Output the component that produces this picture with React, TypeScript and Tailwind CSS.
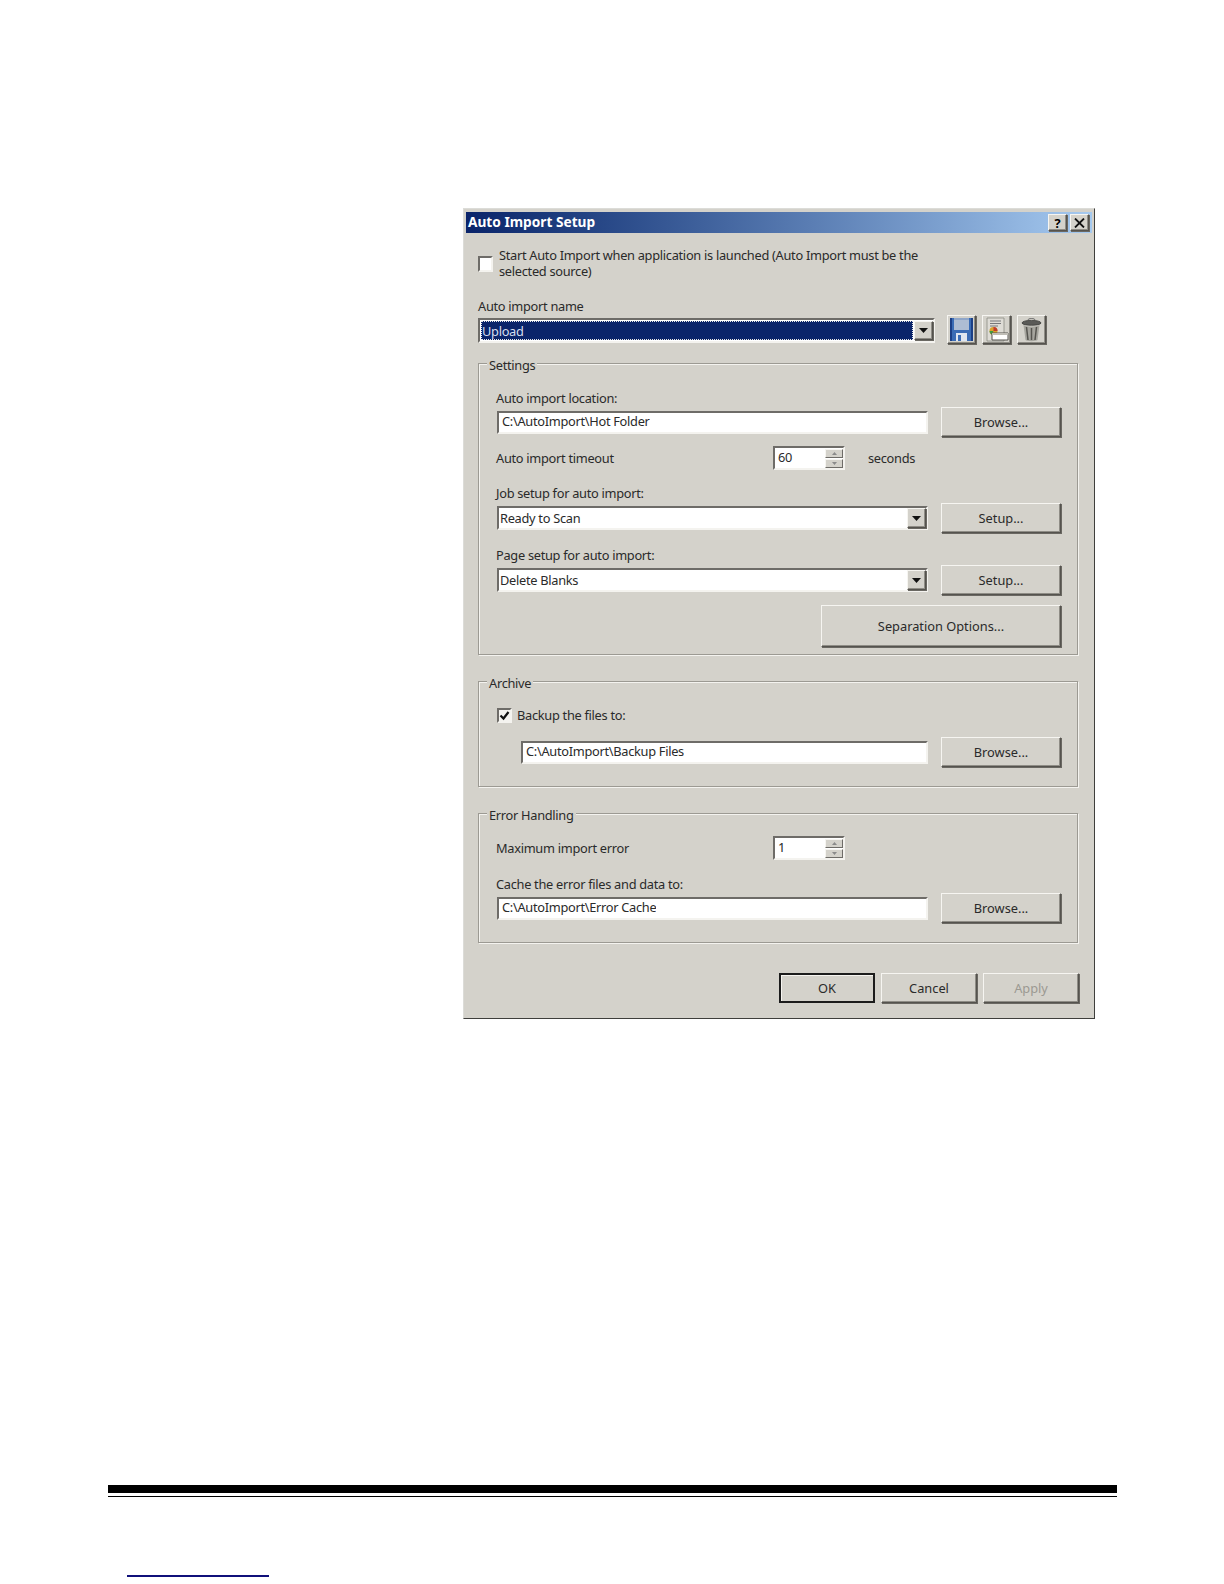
import React from "react";

const font = "font-['Noto_Sans','Liberation_Sans',sans-serif] text-[12.8px] leading-4 tracking-[-0.29px] text-[#2a2a2a]";
const raised = "border border-t-[#f6f5f1] border-l-[#f6f5f1] border-r-[#55534e] border-b-[#55534e] shadow-[inset_-1px_-1px_0_#8f8d86,1px_1px_0_#6a6862]";
const sunken = "border-2 border-t-[#6e6c68] border-l-[#6e6c68] border-r-[#f4f3ef] border-b-[#f4f3ef]";

function Btn({ children, w, h, dim, def }: { children: React.ReactNode; w: string; h: string; dim?: boolean; def?: boolean }) {
  return (
    <div className={`${w} ${h} shrink-0 tracking-normal flex items-center justify-center bg-[#d4d2cb] ${def ? "border-2 border-[#1c1c1c] shadow-[inset_1px_1px_0_#f6f5f1]" : raised} ${dim ? "text-[#9b9992]" : ""}`}>
      {children}
    </div>
  );
}

function Arrow() {
  return (
    <svg width="9" height="5" viewBox="0 0 9 5"><path d="M0 0h9L4.5 5z" fill="#111" /></svg>
  );
}

function Combo({ label }: { label: string }) {
  return (
    <div className={`ml-[1px] w-[431px] h-[24px] flex items-center bg-white pl-[1px] ${sunken}`}>
      <span className="flex-1 truncate">{label}</span>
      <div className={`w-[19px] h-[20px] flex items-center justify-center bg-[#d4d2cb] ${raised}`}><Arrow /></div>
    </div>
  );
}

function TextBox({ value, w = "w-[431px]" }: { value: string; w?: string }) {
  return (
    <div className={`${w} h-[23px] flex items-center bg-white pl-[3px] ${sunken}`}>
      <span className="truncate pb-[2px]">{value}</span>
    </div>
  );
}

function Spinner({ value }: { value: string }) {
  const part = "w-[18px] h-[9px] bg-[#d4d2cb] flex items-center justify-center border border-t-[#f6f5f1] border-l-[#f6f5f1] border-r-[#6e6c68] border-b-[#6e6c68]";
  return (
    <div className={`w-[72px] h-[24px] flex items-center bg-white pl-[3px] ${sunken}`}>
      <span className="flex-1 pb-[2px]">{value}</span>
      <div className="flex flex-col gap-[1px]">
        <div className={part}><svg width="5" height="3" viewBox="0 0 5 3"><path d="M0 3h5L2.5 0z" fill="#8a8a8a" /></svg></div>
        <div className={part}><svg width="5" height="3" viewBox="0 0 5 3"><path d="M0 0h5L2.5 3z" fill="#8a8a8a" /></svg></div>
      </div>
    </div>
  );
}

function Group({ title, children, h }: { title: string; children: React.ReactNode; h: string }) {
  return (
    <div className={`w-[600px] ${h} border border-[#9c9a93] shadow-[inset_1px_1px_0_#f4f3ef,1px_1px_0_#f4f3ef]`}>
      <div className="w-fit ml-[8px] -mt-[6px] h-[13px] px-[2px] bg-[#d4d2cb] flex items-center">{title}</div>
      {children}
    </div>
  );
}

function IconBtn({ children }: { children: React.ReactNode }) {
  return <div className={`w-[29px] h-[29px] flex items-center justify-center bg-[#d4d2cb] ${raised}`}>{children}</div>;
}

export default function App() {
  return (
    <div className="w-[1224px] h-[1584px] bg-white pt-[208px] flex flex-col">
      <div className={`ml-[463px] w-[632px] h-[811px] shrink-0 bg-[#d4d2cb] border border-t-[#dcdcd8] border-l-[#dcdcd8] border-r-[#3f3f3c] border-b-[#3f3f3c] px-[2px] pt-[3px] ${font}`}>
        {/* title bar */}
        <div className="h-[21px] bg-gradient-to-r from-[#0a246a] to-[#a6caf0] flex items-center pl-[2px] pr-[3px]">
          <span className="flex-1 font-bold text-white text-[13.700px] tracking-normal pb-[2px]">Auto Import Setup</span>
          <div className={`w-[19px] h-[17px] flex items-center justify-center bg-[#d4d2cb] font-bold text-black ${raised}`}>?</div>
          <div className={`w-[19px] h-[17px] ml-[3px] flex items-center justify-center bg-[#d4d2cb] ${raised}`}>
            <svg width="11" height="10" viewBox="0 0 11 10"><path d="M1 0.5L10 9.5M10 0.5L1 9.5" stroke="#111" strokeWidth="1.8" /></svg>
          </div>
        </div>

        <div className="pl-[12px]">
          {/* start checkbox */}
          <div className="h-[32px] mt-[15px] flex items-center">
            <div className={`w-[15px] h-[16px] bg-white ${sunken}`} />
            <div className="ml-[6px] w-[440px] leading-[16px] -mt-[2px]">Start Auto Import when application is launched (Auto Import must be the selected source)</div>
          </div>

          <div className="mt-[18px] h-[16px]">Auto import name</div>
          {/* name row */}
          <div className="mt-[1px] h-[29px] flex items-start">
            <div className={`mt-[3px] w-[457px] h-[25px] flex items-center bg-white ${sunken}`}>
              <div className="flex-1 h-[19px] ml-[1px] bg-[#0a246a] text-[#d5deef] flex items-center outline-1 outline-dotted outline-[#e8e8e8] -outline-offset-1">
                <span className="ml-[1px]">Upload</span>
              </div>
              <div className={`w-[19px] h-[19px] ml-[1px] flex items-center justify-center bg-[#d4d2cb] ${raised}`}><Arrow /></div>
            </div>
            <div className="ml-[12px] flex gap-[6px]">
              <IconBtn>
                <svg width="25" height="25" viewBox="0 0 25 25">
                  <path d="M1 1h23v23H1z" fill="#3a6cb5" />
                  <path d="M1 1h2v23H1zM22 1h2v23h-2z" fill="#1b3f86" />
                  <path d="M5 1h15v12H5z" fill="#aebdd3" />
                  <path d="M5 1h15v2H5z" fill="#8fa6c9" />
                  <path d="M7 16h11v8H7z" fill="#dfe6f0" />
                  <path d="M9 18h3v6H9z" fill="#3a6cb5" />
                </svg>
              </IconBtn>
              <IconBtn>
                <svg width="25" height="25" viewBox="0 0 25 25">
                  <path d="M3 1h17v23H3z" fill="#dedcd6" stroke="#8a8a84" strokeWidth="0.8" />
                  <path d="M6 4h11M6 6.500h11M6 9h8" stroke="#77777a" strokeWidth="1" />
                  <circle cx="9.500" cy="14" r="4" fill="#d9a12b" />
                  <path d="M9.500 14V10a4 4 0 0 1 4 4z" fill="#c23b2e" />
                  <path d="M9.500 14h-4a4 4 0 0 0 2 3.500z" fill="#3f9a45" />
                  <path d="M8 16h16v7H8z" fill="#fff" stroke="#55534e" strokeWidth="1" />
                  <path d="M8 16h16v2H8z" fill="#bfbdb6" />
                </svg>
              </IconBtn>
              <IconBtn>
                <svg width="25" height="25" viewBox="0 0 25 25">
                  <path d="M3 6C3 2.500 22 2.500 22 6 22 9 3 9 3 6z" fill="#5a5a57" stroke="#3c3c3a" strokeWidth="0.8" />
                  <path d="M9 3c0-2 7-2 7 0" fill="none" stroke="#666" strokeWidth="1" />
                  <path d="M4.500 8l2 15c1.500 1.500 10.500 1.500 12 0l2-15c-4 2-12 2-16 0z" fill="#a6a59e" />
                  <path d="M7.500 10l1.500 13M12.500 11v12M17.500 10l-1.500 13" stroke="#55544f" strokeWidth="1.500" />
                </svg>
              </IconBtn>
            </div>
          </div>

          {/* Settings */}
          <div className="mt-[19px]">
            <Group title="Settings" h="h-[292px]">
              <div className="pl-[17px] pr-[16px]">
                <div className="mt-[19px] h-[17px]">Auto import location:</div>
                <div className="h-[30px] flex items-center justify-between">
                  <div className="pl-[1px]"><TextBox value="C:\AutoImport\Hot Folder" /></div>
                  <Btn w="w-[120px]" h="h-[30px]">Browse...</Btn>
                </div>
                <div className="mt-[9px] h-[24px] flex items-center">
                  <span className="w-[277px]">Auto import timeout</span>
                  <Spinner value="60" />
                  <span className="ml-[23px]">seconds</span>
                </div>
                <div className="mt-[15px] h-[17px]">Job setup for auto import:</div>
                <div className="mt-[1px] h-[30px] flex items-center justify-between">
                  <Combo label="Ready to Scan" />
                  <Btn w="w-[120px]" h="h-[30px]">Setup...</Btn>
                </div>
                <div className="mt-[14px] h-[17px]">Page setup for auto import:</div>
                <div className="mt-[1px] h-[30px] flex items-center justify-between">
                  <Combo label="Delete Blanks" />
                  <Btn w="w-[120px]" h="h-[30px]">Setup...</Btn>
                </div>
                <div className="mt-[10px] flex justify-end">
                  <Btn w="w-[240px]" h="h-[42px]">Separation Options...</Btn>
                </div>
              </div>
            </Group>
          </div>

          {/* Archive */}
          <div className="mt-[26px]">
            <Group title="Archive" h="h-[106px]">
              <div className="pl-[17px] pr-[16px]">
                <div className="mt-[18px] h-[16px] flex items-center">
                  <div className={`ml-[1px] w-[15px] h-[15px] bg-[#f4f3ef] flex items-center justify-center ${sunken}`}>
                    <svg width="11" height="11" viewBox="0 0 11 11" className="shrink-0"><path d="M1.500 5.500l3 3L9.500 2" fill="none" stroke="#111" strokeWidth="2.200" /></svg>
                  </div>
                  <span className="ml-[5px]">Backup the files to:</span>
                </div>
                <div className="mt-[14px] h-[30px] flex items-center justify-between">
                  <div className="pl-[25px]"><TextBox value="C:\AutoImport\Backup Files" w="w-[407px]" /></div>
                  <Btn w="w-[120px]" h="h-[30px]">Browse...</Btn>
                </div>
              </div>
            </Group>
          </div>

          {/* Error handling */}
          <div className="mt-[26px]">
            <Group title="Error Handling" h="h-[130px]">
              <div className="pl-[17px] pr-[16px]">
                <div className="mt-[15px] h-[24px] flex items-center">
                  <span className="w-[277px]">Maximum import error</span>
                  <Spinner value="1" />
                </div>
                <div className="mt-[16px] h-[17px]">Cache the error files and data to:</div>
                <div className="mt-0 h-[30px] flex items-center justify-between">
                  <div className="pl-[1px]"><TextBox value="C:\AutoImport\Error Cache" /></div>
                  <Btn w="w-[120px]" h="h-[30px]">Browse...</Btn>
                </div>
              </div>
            </Group>
          </div>

          {/* dialog buttons */}
          <div className="mt-[30px] w-[601px] flex justify-end gap-[6px]">
            <Btn w="w-[96px]" h="h-[30px]" def>OK</Btn>
            <Btn w="w-[96px]" h="h-[30px]">Cancel</Btn>
            <Btn w="w-[96px]" h="h-[30px]" dim>Apply</Btn>
          </div>
        </div>
      </div>

      {/* page footer rule */}
      <div className="ml-[108px] mt-[466px] w-[1009px] h-[8px] shrink-0 bg-black" />
      <div className="ml-[108px] mt-[3px] w-[1009px] h-[1px] shrink-0 bg-black" />
      <div className="ml-[127px] mt-[78px] w-[142px] h-[1.5px] shrink-0 bg-[#10107a]" />
    </div>
  );
}
